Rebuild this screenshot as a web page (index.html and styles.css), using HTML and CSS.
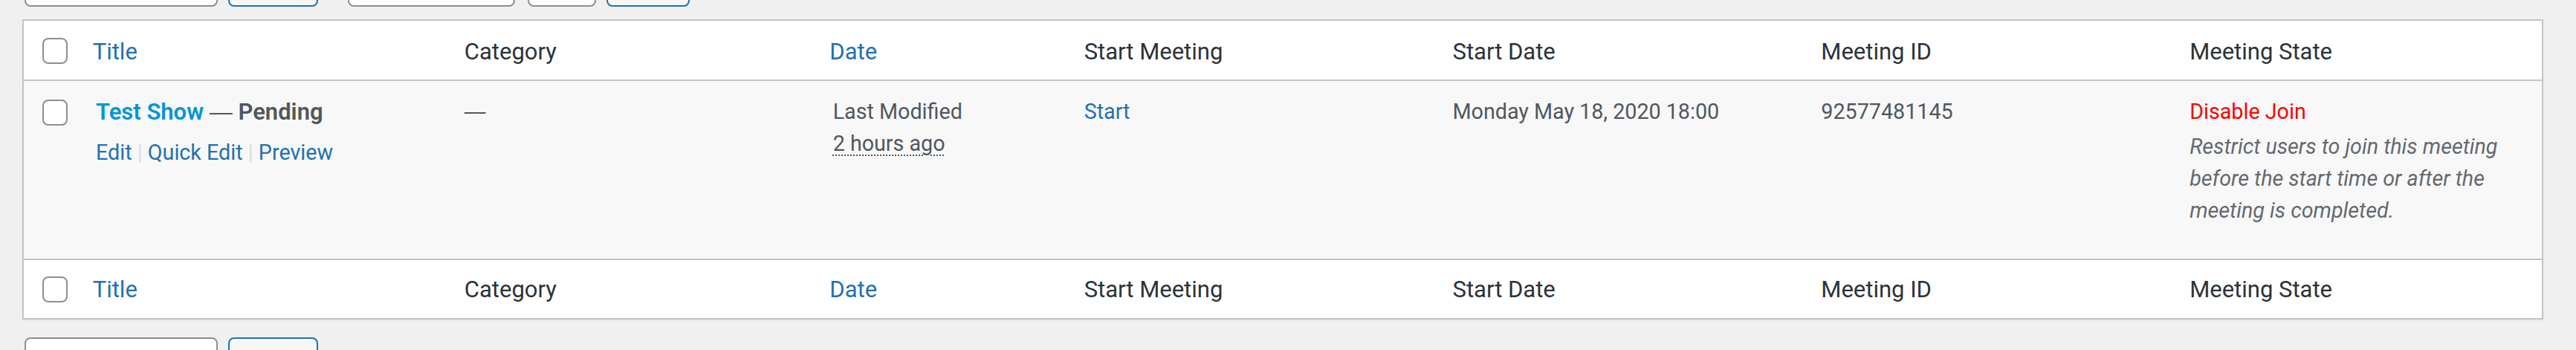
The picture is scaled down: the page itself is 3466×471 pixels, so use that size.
FILE: index.html
```html
<!DOCTYPE html>
<html lang="en">
<head>
<meta charset="utf-8">
<title>Zoom Meetings</title>
<link rel="stylesheet" href="styles.css">
</head>
<body>
<div class="wrap">
  <div class="tablenav tablenav-top">
    <div class="actions bulkactions">
      <button type="button" class="control select sel-bulk" aria-label="Bulk actions"></button>
      <button type="button" class="control button btn-apply" aria-label="Apply"></button>
    </div>
    <div class="actions filters">
      <button type="button" class="control select sel-date" aria-label="All dates"></button>
      <button type="button" class="control select sel-small" aria-label="Filter type"></button>
      <button type="button" class="control button btn-filter" aria-label="Filter"></button>
    </div>
  </div>

  <table class="wp-list-table">
    <colgroup>
      <col class="c-check">
      <col>
      <col>
      <col class="c-date">
      <col>
      <col>
      <col>
      <col>
    </colgroup>
    <thead>
      <tr>
        <th class="check-column"><span class="checkbox"></span></th>
        <th class="sortable"><a href="#">Title</a></th>
        <th>Category</th>
        <th class="sortable"><a href="#">Date</a></th>
        <th>Start Meeting</th>
        <th>Start Date</th>
        <th>Meeting ID</th>
        <th>Meeting State</th>
      </tr>
    </thead>
    <tbody>
      <tr>
        <td class="check-column"><span class="checkbox"></span></td>
        <td class="column-title">
          <strong class="title-line"><a class="row-title" href="#">Test Show</a> <span class="mdash">—</span> <span class="post-state">Pending</span></strong>
          <div class="row-actions"><a href="#">Edit</a><span class="sep"> | </span><a href="#">Quick Edit</a><span class="sep"> | </span><a href="#">Preview</a></div>
        </td>
        <td><span class="dash">—</span></td>
        <td>Last Modified<br><span class="ago">2 hours ago</span></td>
        <td><a href="#">Start</a></td>
        <td>Monday May 18, 2020 18:00</td>
        <td>92577481145</td>
        <td>
          <a class="state-link" href="#">Disable Join</a>
          <p class="description">Restrict users to join this meeting before the start time or after the meeting is completed.</p>
        </td>
      </tr>
    </tbody>
    <tfoot>
      <tr>
        <th class="check-column"><span class="checkbox"></span></th>
        <th class="sortable"><a href="#">Title</a></th>
        <th>Category</th>
        <th class="sortable"><a href="#">Date</a></th>
        <th>Start Meeting</th>
        <th>Start Date</th>
        <th>Meeting ID</th>
        <th>Meeting State</th>
      </tr>
    </tfoot>
  </table>

  <div class="tablenav tablenav-bottom">
    <div class="actions bulkactions">
      <button type="button" class="control select sel-bulk" aria-label="Bulk actions"></button>
      <button type="button" class="control button btn-apply" aria-label="Apply"></button>
    </div>
  </div>
</div>
</body>
</html>
```

FILE: styles.css
```css
html, body {
  margin: 0;
  padding: 0;
  background: #f0f0f1;
}

body {
  font-family: Roboto, "Liberation Sans", sans-serif;
  color: #50575e;
  overflow: hidden;
}

a {
  color: #2271b1;
  text-decoration: none;
}

.wrap {
  padding: 0 44px 0 30px;
}

/* ---------- table navigation ---------- */
.tablenav {
  display: flex;
  padding-left: 3px;
  height: 66px;
}

.tablenav-top {
  margin-top: -57px;
  margin-bottom: 17px;
}

.tablenav-bottom {
  margin-top: 24px;
}

.actions {
  display: flex;
  gap: 14px;
}

.bulkactions {
  margin-right: 40px;
}

.control {
  display: block;
  box-sizing: border-box;
  height: 66px;
  margin: 0;
  padding: 0;
  border-radius: 8px;
  border: 2px solid #8c8f94;
  background: #fff;
}

.control.button {
  border-color: #2271b1;
  background: #f6f7f7;
}

.sel-bulk { width: 260px; }
.btn-apply { width: 121px; }
.sel-date { width: 225px; margin-right: 3px; }
.sel-small { width: 92px; }
.btn-filter { width: 112px; }

/* ---------- list table ---------- */
.wp-list-table {
  width: 100%;
  table-layout: fixed;
  border-collapse: separate;
  border-spacing: 0;
  border: 2px solid #c3c4c7;
  background: #fff;
  box-shadow: 0 2px 2px rgba(0, 0, 0, 0.04);
}

.c-check { width: 75px; }
.c-date { width: 338px; }

th, td {
  text-align: left;
  vertical-align: top;
  overflow-wrap: break-word;
}

thead th,
tfoot th {
  font-size: 31px;
  font-weight: 400;
  line-height: 43.3px;
  color: #2c3338;
  padding: 20px 22px 16px;
}

thead th {
  border-bottom: 2px solid #c3c4c7;
}

tfoot th {
  border-top: 2px solid #c3c4c7;
  padding-top: 18px;
  padding-bottom: 16.7px;
}

th.sortable {
  padding: 0;
}

th.sortable a {
  display: block;
  padding: 20px 17.7px 16px;
}

tfoot th.sortable a {
  padding-top: 18px;
  padding-bottom: 16.7px;
}

th.check-column {
  padding: 23px 0 0 25px;
}

tfoot th.check-column {
  padding-top: 22px;
}

td.check-column {
  padding: 25px 0 0 25px;
}

.checkbox {
  display: block;
  box-sizing: border-box;
  width: 34px;
  height: 35px;
  border: 2px solid #8c8f94;
  border-radius: 8px;
  background: #fff;
}

tbody tr {
  background: #f8f8f8;
}

tbody td {
  font-size: 28.7px;
  line-height: 43.1px;
  padding: 20px 22px 17.7px;
}

/* title column */
.title-line {
  display: block;
  font-size: 31px;
  font-weight: 600;
  color: #50575e;
  margin-bottom: 6px;
}

.row-title {
  color: #0096d6;
}

.mdash {
  font-family: "Liberation Sans", sans-serif;
  font-weight: 400;
}

.post-state {
  color: #50575e;
}

.row-actions {
  padding-top: 5.5px;
  color: #c3c4c7;
}

.row-actions .sep {
  color: #dcdcde;
}

.dash {
  font-family: "Liberation Sans", sans-serif;
  color: #50575e;
}

.ago {
  text-decoration: underline dotted #50575e;
  text-decoration-thickness: 2px;
  text-underline-offset: 5px;
}

/* meeting state column */
.state-link {
  color: #ff0000;
}

.description {
  margin: 3.3px 0 25px;
  font-style: italic;
  color: #646970;
}
```
